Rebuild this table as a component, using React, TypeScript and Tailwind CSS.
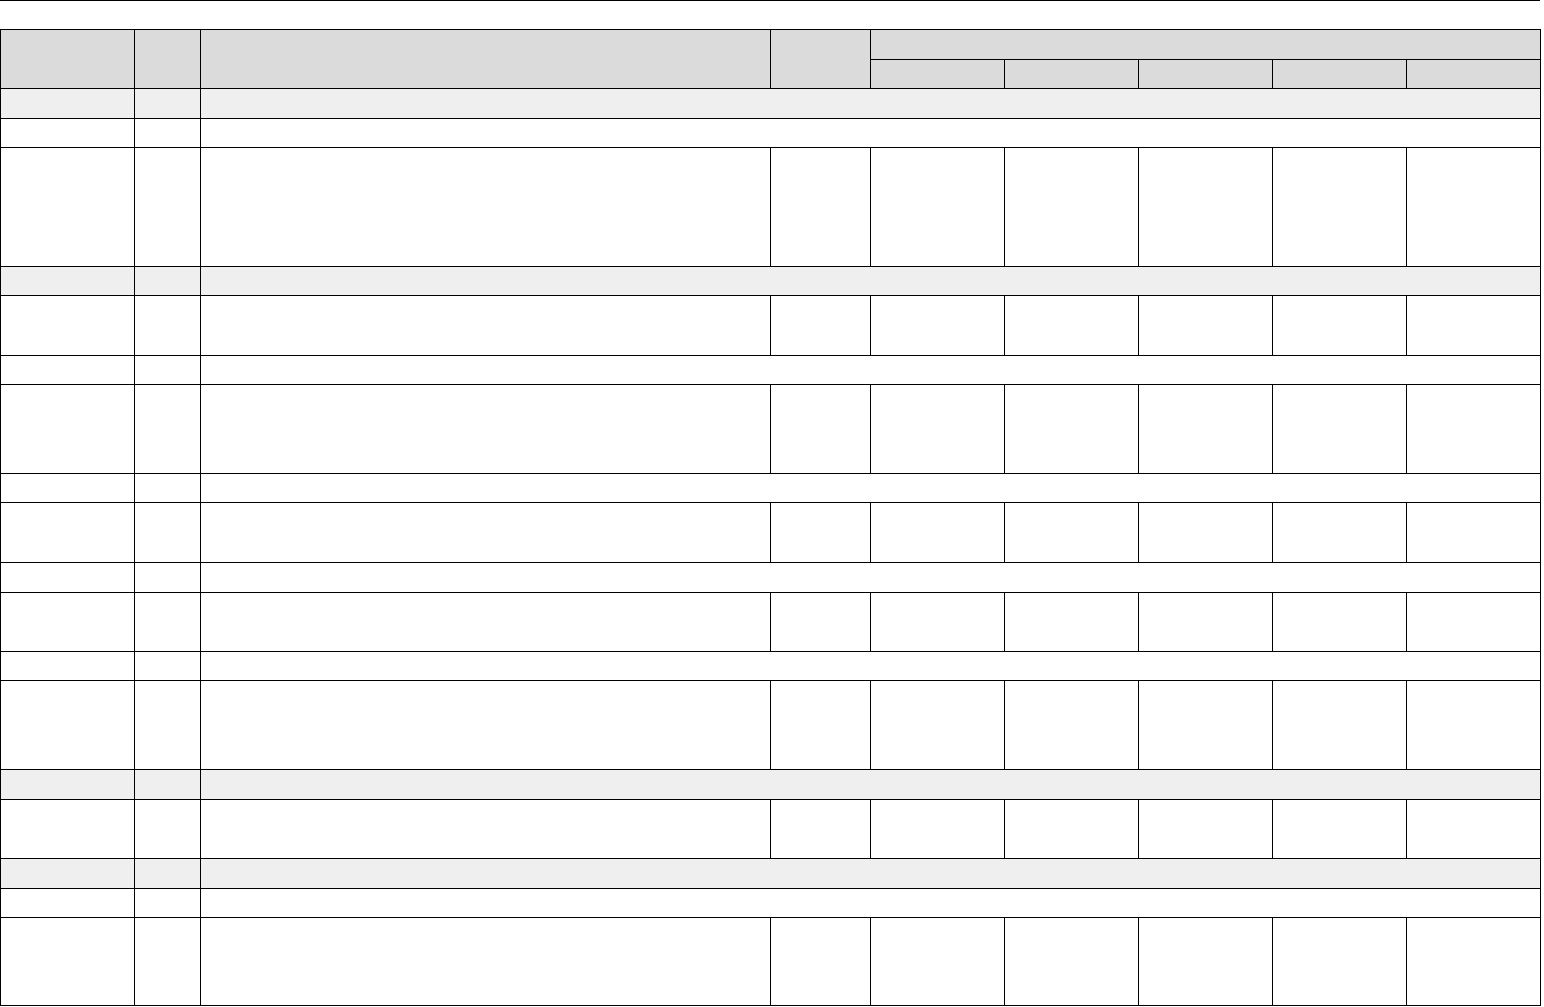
const cols = [134, 66, 570, 100, 134, 134, 134, 134, 134];

type Row = { kind: "section" | "label" | "data"; h: number };

const rows: Row[] = [
  { kind: "section", h: 30 },
  { kind: "label", h: 29 },
  { kind: "data", h: 119 },
  { kind: "section", h: 29 },
  { kind: "data", h: 60 },
  { kind: "label", h: 29 },
  { kind: "data", h: 89 },
  { kind: "label", h: 29 },
  { kind: "data", h: 60 },
  { kind: "label", h: 30 },
  { kind: "data", h: 59 },
  { kind: "label", h: 29 },
  { kind: "data", h: 89 },
  { kind: "section", h: 30 },
  { kind: "data", h: 59 },
  { kind: "section", h: 30 },
  { kind: "label", h: 29 },
  { kind: "data", h: 88 },
];

const cell = "border border-black p-0";

export default function App() {
  return (
    <div className="min-h-screen bg-white font-['Liberation_Sans',sans-serif]">
      <div className="w-[1540px] border-t border-black pt-[28px]">
        <table className="w-[1540px] table-fixed border-collapse">
          <colgroup>
            {cols.map((w, i) => (
              <col key={i} style={{ width: w }} />
            ))}
          </colgroup>
          <thead className="bg-[#dbdbdb]">
            <tr className="h-[30px]">
              <th rowSpan={2} className={cell}></th>
              <th rowSpan={2} className={cell}></th>
              <th rowSpan={2} className={cell}></th>
              <th rowSpan={2} className={cell}></th>
              <th colSpan={5} className={cell}></th>
            </tr>
            <tr className="h-[29px]">
              <th className={cell}></th>
              <th className={cell}></th>
              <th className={cell}></th>
              <th className={cell}></th>
              <th className={cell}></th>
            </tr>
          </thead>
          <tbody>
            {rows.map((r, i) =>
              r.kind === "data" ? (
                <tr key={i} style={{ height: r.h }}>
                  {cols.map((_, j) => (
                    <td key={j} className={cell}></td>
                  ))}
                </tr>
              ) : (
                <tr
                  key={i}
                  className={r.kind === "section" ? "bg-[#efefef]" : "bg-white"}
                  style={{ height: r.h }}
                >
                  <td className={cell}></td>
                  <td className={cell}></td>
                  <td colSpan={7} className={cell}></td>
                </tr>
              )
            )}
          </tbody>
        </table>
      </div>
    </div>
  );
}
